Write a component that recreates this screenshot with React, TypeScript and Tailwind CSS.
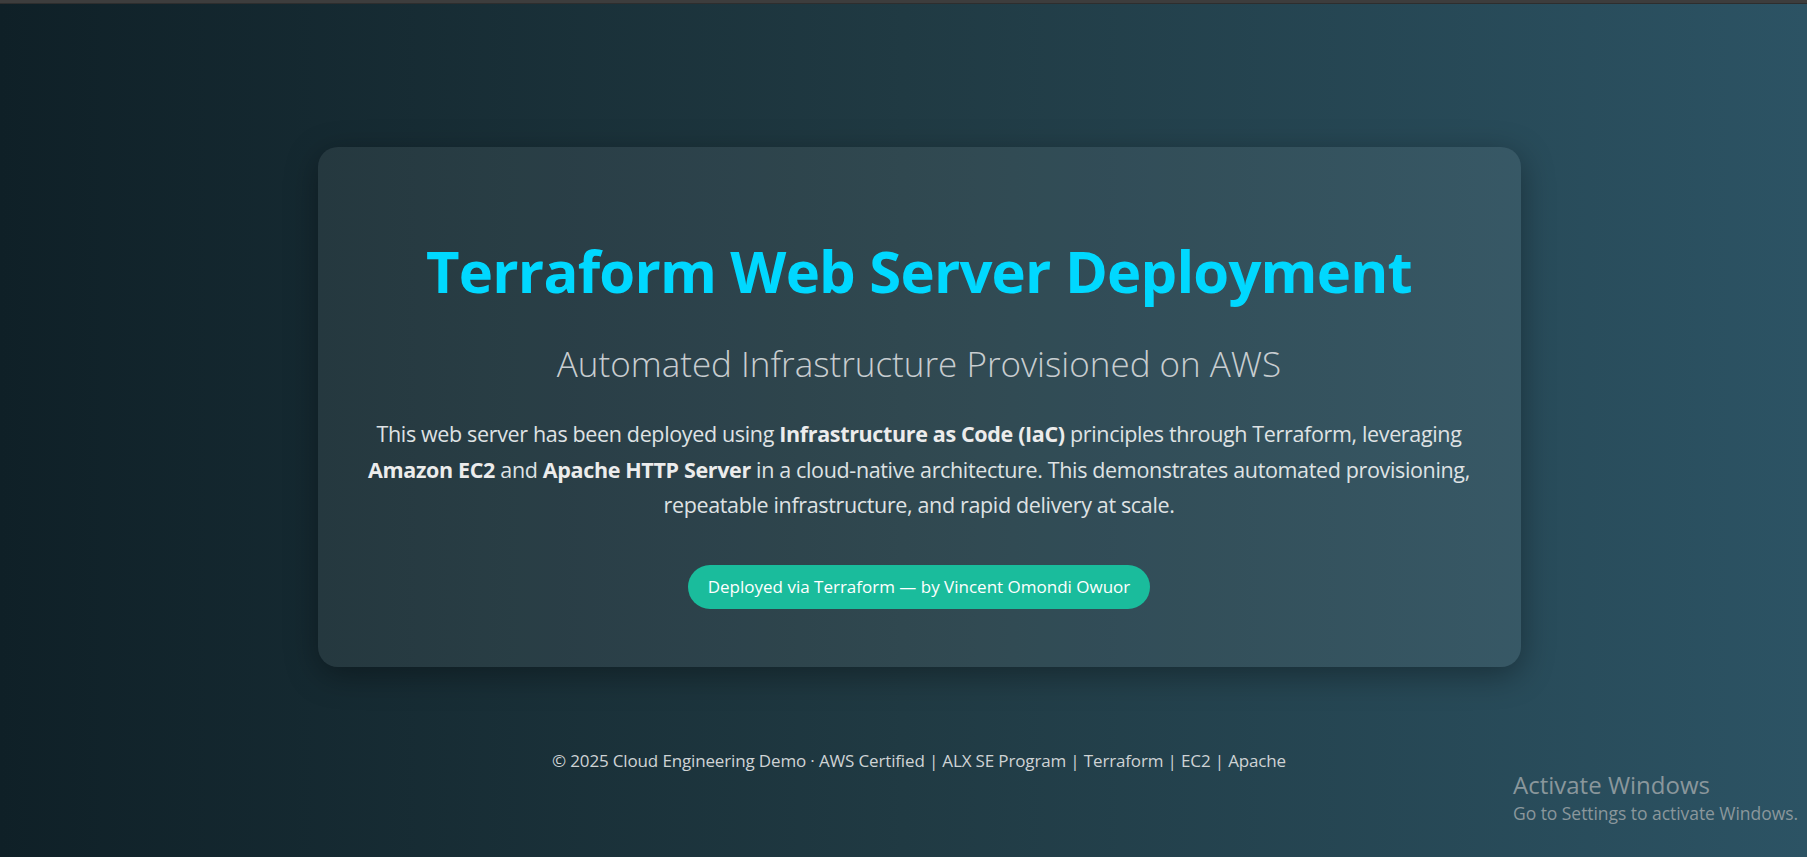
import React from "react";

export default function App() {
  return (
    <div
      className="relative min-h-screen w-full overflow-hidden bg-[linear-gradient(to_right,#0f2027,#203a43,#2c5364)]"
      style={{ fontFamily: '"Open Sans", "Noto Sans", sans-serif' }}
    >
      <div className="h-[4px] w-full bg-[#3d3d3d] border-b border-[#2e2e2e]" />
      <div className="flex flex-col items-center pl-[31px]">
        <div className="mt-[143px] w-[1203px] rounded-[20px] bg-white/[0.07] px-[40px] pt-[88px] pb-[58px] text-center shadow-[0_8px_32px_rgba(0,0,0,0.35)]">
          <h1 className="text-[58px] leading-[71px] font-bold tracking-[-0.8px] text-[#00d8ff]">
            Terraform Web Server Deployment
          </h1>
          <h2 className="mt-[34px] text-[35px] leading-[48px] font-light text-[#c8cdd0]">
            Automated Infrastructure Provisioned on AWS
          </h2>
          <p className="mt-[28px] text-[21.5px] leading-[35.5px] tracking-[-0.35px] text-[#dfe2e4]">
            This web server has been deployed using{" "}
            <strong className="font-bold text-[#ececec]">Infrastructure as Code (IaC)</strong>{" "}
            principles through Terraform, leveraging
            <br />
            <strong className="font-bold text-[#ececec]">Amazon EC2</strong> and{" "}
            <strong className="font-bold text-[#ececec]">Apache HTTP Server</strong> in a
            cloud-native architecture. This demonstrates automated provisioning,
            <br />
            repeatable infrastructure, and rapid delivery at scale.
          </p>
          <div className="mt-[42px] flex justify-center">
            <span className="inline-block rounded-full bg-[#1abc9c] px-[20px] py-[10px] text-[17px] leading-[24px] text-white">
              Deployed via Terraform — by Vincent Omondi Owuor
            </span>
          </div>
        </div>
        <footer className="mt-[82px] text-[17px] leading-[24px] tracking-[-0.15px] text-[#cfd3d5]">
          © 2025 Cloud Engineering Demo · AWS Certified | ALX SE Program | Terraform | EC2 | Apache
        </footer>
      </div>
      <div className="absolute left-[1513px] top-[770px] whitespace-nowrap text-[#8a979c]">
        <div className="text-[24px] leading-[30px]">Activate Windows</div>
        <div className="text-[17.5px] leading-[27px] tracking-[-0.05px]">Go to Settings to activate Windows.</div>
      </div>
    </div>
  );
}
